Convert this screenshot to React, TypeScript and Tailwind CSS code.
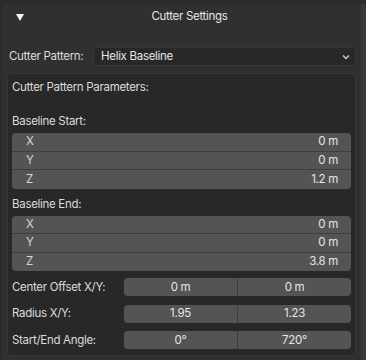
import React from 'react';

// Simple vector field row (label left, value right)
const VecRow = ({ axis, value, last }: { axis: string; value: string; last?: boolean }) => (
  <div className={`flex h-[18.5px] items-center justify-between bg-[#545454] pl-[14px] pr-[13px] ${last ? '' : 'border-b border-[#3e3e3e]'}`}>
    <span className="text-[#d6d6d6]">{axis}</span>
    <span className="text-[#e6e6e6]">{value}</span>
  </div>
);

const VecGroup = ({ title, values }: { title: string; values: string[] }) => (
  <div className="mt-[8px]">
    <div className="h-[15px] leading-[15px] text-[#dcdcdc]">{title}</div>
    <div className="mt-[4px] overflow-hidden rounded-[4px]">
      {['X', 'Y', 'Z'].map((a, i) => (
        <VecRow key={a} axis={a} value={values[i]} last={i === 2} />
      ))}
    </div>
  </div>
);

// Two-field row (e.g. Radius X/Y)
const PairRow = ({ label, a, b }: { label: string; a: string; b: string }) => (
  <div className="flex h-[26.5px] items-center">
    <span className="w-[112px] text-[#dcdcdc]">{label}</span>
    <div className="flex h-[18px] flex-1 overflow-hidden rounded-[4px] bg-[#545454] text-[#e6e6e6]">
      <div className="flex flex-1 items-center justify-center border-r border-[#3e3e3e]">{a}</div>
      <div className="flex flex-1 items-center justify-center">{b}</div>
    </div>
  </div>
);

const App = () => {
  return (
    <div className="flex h-[360px] w-[366px] overflow-hidden bg-[#2b2b2b] font-['Inter','Liberation_Sans',sans-serif] text-[11.5px] tracking-[-0.3px]">
      <div className="flex-1 pl-[2px] pt-[4px]">
        <div className="h-[420px] rounded-[4px] bg-[#303030]">
          {/* header */}
          <div className="relative flex h-[26px] items-center justify-center">
            <svg className="absolute left-[14px] top-[10px]" width="8" height="7" viewBox="0 0 8 7">
              <path d="M0 0 H8 L4 7 Z" fill="#f2f2f2" />
            </svg>
            <span className="pl-[16px] text-[#e6e6e6]">Cutter Settings</span>
          </div>

          <div className="px-[5px] pt-[17px]">
            {/* pattern dropdown */}
            <div className="flex items-center">
              <span className="w-[86px] pl-[2px] text-[#dcdcdc]">Cutter Pattern:</span>
              <div className="flex h-[19px] flex-1 items-center justify-between rounded-[4px] border border-[#363636] bg-[#282828] pl-[7px] pr-[5px] text-[#e6e6e6]">
                <span>Helix Baseline</span>
                <svg width="8" height="6" viewBox="0 0 8 6">
                  <path d="M1 1.5 L4 4.5 L7 1.5" stroke="#cfcfcf" strokeWidth="1.3" fill="none" />
                </svg>
              </div>
            </div>

            {/* parameters box */}
            <div className="mt-[7px] h-[283px] rounded-[4px] border border-[#373737] bg-[#282828] px-[4px] pt-[6px]">
              <div className="h-[15px] leading-[15px] text-[#dcdcdc]">Cutter Pattern Parameters:</div>
              <div className="h-[11px]" />
              <VecGroup title="Baseline Start:" values={['0 m', '0 m', '1.2 m']} />
              <VecGroup title="Baseline End:" values={['0 m', '0 m', '3.8 m']} />
              <div className="mt-[3px]">
                <PairRow label="Center Offset X/Y:" a="0 m" b="0 m" />
                <PairRow label="Radius X/Y:" a="1.95" b="1.23" />
                <PairRow label="Start/End Angle:" a="0°" b="720°" />
              </div>
            </div>
          </div>
        </div>
      </div>
      <div className="mt-[4px] w-[5px] bg-[#383838]" />
    </div>
  );
};

export default App;
